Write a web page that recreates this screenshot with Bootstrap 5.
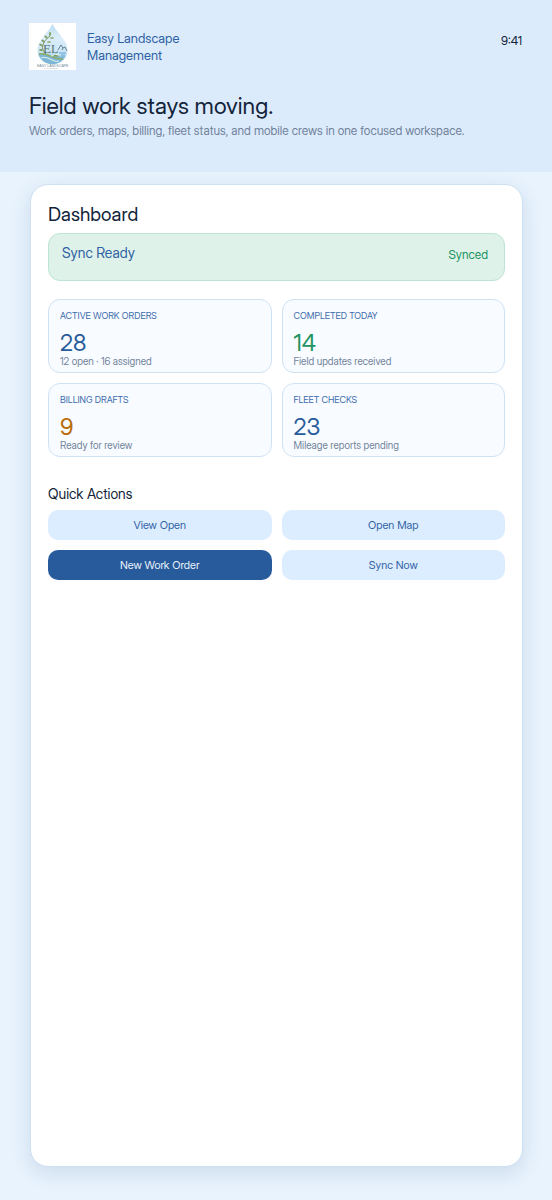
<!DOCTYPE html>
<html lang="en">
<head>
<meta charset="utf-8">
<meta name="viewport" content="width=device-width, initial-scale=1">
<title>Easy Landscape Management</title>
<link href="https://cdn.jsdelivr.net/npm/bootstrap@5.3.0/dist/css/bootstrap.min.css" rel="stylesheet">
<style>
  body { font-family: "Inter Display", Inter, "Liberation Sans", sans-serif; background: #e8f3fd; color: #13243a; }
  .app-header { background: #dcebfb; padding: 23px 30px 32px 29px; }
  .logo { width: 47px; height: 47px; background: #fff; }
  .brand { font-size: 13px; line-height: 17px; color: #2f62a3; max-width: 120px; padding-top: 7px; margin-left: 11px; }
  .clock { font-size: 12px; line-height: 16px; padding-top: 10px; }
  .headline { font-size: 23px; line-height: 30px; font-weight: 400; margin-top: 21px; }
  .muted { color: #71839b; }
  .tagline { font-size: 12px; line-height: 19px; }
  .panel { background: #fff; border: 1px solid #cde1f3; border-radius: 18px; margin: 12px 29px 33px 30px; padding: 17px; box-shadow: 0 6px 20px rgba(40, 80, 120, .14); }
  .panel-title { font-size: 19px; line-height: 26px; font-weight: 400; margin: 0 0 5px; }
  .sync { background: #dff2ea; border: 1px solid #bce5d3; border-radius: 12px; height: 48px; padding: 9px 16px 0 13px; margin-bottom: 18px; }
  .sync-name { font-size: 14px; line-height: 20px; color: #2f62a3; }
  .sync-state { font-size: 12px; line-height: 24px; color: #219461; }
  .tiles { display: grid; grid-template-columns: 1fr 1fr; gap: 10px; }
  .tile { background: #f8fbff; border: 1px solid #cfe2f4; border-radius: 12px; height: 74px; padding: 9px 11px 0; }
  .tile-label { font-size: 9px; line-height: 14px; color: #3c6cab; }
  .tile-value { font-size: 23px; line-height: 28px; color: #285b9b; margin-top: 6px; }
  .tile-note { font-size: 10px; line-height: 12px; margin-top: -2px; }
  .is-green { color: #219461; }
  .is-amber { color: #b96c0c; }
  .section-title { font-size: 14px; line-height: 20px; font-weight: 400; margin: 27px 0 6px; }
  .action { --bs-btn-font-size: 11px; --bs-btn-line-height: 16px; --bs-btn-border-radius: 10px; --bs-btn-bg: #dcedff; --bs-btn-color: #3263a5; --bs-btn-border-width: 0; --bs-btn-hover-bg: #cbe3fc; --bs-btn-hover-color: #285b9b; --bs-btn-padding-y: 7px; }
  .action-main { --bs-btn-bg: #285b9b; --bs-btn-color: #eaf3fd; --bs-btn-hover-bg: #204c83; --bs-btn-hover-color: #fff; }
</style>
</head>
<body>
<div class="d-flex flex-column min-vh-100">
  <header class="app-header">
    <div class="d-flex align-items-start">
      <svg class="logo flex-shrink-0" viewBox="0 0 47 47" role="img" aria-label="Easy Landscape Management logo">
        <defs><linearGradient id="drop" x1="0" y1="0" x2="0" y2="1"><stop offset="0" stop-color="#b9dcf2"/><stop offset=".35" stop-color="#dceefa"/><stop offset=".7" stop-color="#c9e4f6"/><stop offset="1" stop-color="#66add8"/></linearGradient></defs>
        <path d="M23.500 1C20 9 8.500 17 8.500 27C8.500 35 15 41 23.500 41S38.500 35 38.500 27C38.500 17 27 9 23.500 1Z" fill="url(#drop)"/>
        <path d="M9.500 31C17 29 23 35 36 33C33 39 28 41 23.500 41C17 41 11 37 9.500 31Z" fill="#7db6d6"/>
        <path d="M10 31C18 29 24 37 34 36" stroke="#8fab62" stroke-width="1.500" fill="none"/>
        <path d="M12 35C18 32 24 40 30 38M22 33Q30 30 37 31" stroke="#e6f3ef" stroke-width="1" fill="none"/>
        <path d="M24 33Q27 30 30 34Z" fill="#809e4d"/>
        <path d="M17 31C11 26 13 19 21 13" stroke="#607d42" stroke-width=".8" fill="none"/>
        <g fill="#819d5d"><ellipse cx="21" cy="11" rx="1" ry="2"/><ellipse cx="17" cy="14" rx="2" ry="1" transform="rotate(40 17 14)"/><ellipse cx="23" cy="15" rx="2" ry=".8"/><ellipse cx="14" cy="18" rx="2" ry="1" transform="rotate(40 14 18)"/><ellipse cx="20" cy="19" rx="2" ry=".8"/><ellipse cx="12" cy="22" rx="2" ry="1" transform="rotate(30 12 22)"/><ellipse cx="12" cy="27" rx="2" ry="1"/></g>
        <path d="M29 27L32 22L34 25L36 24L38 28M34 25L33 27" stroke="#4e6876" stroke-width=".8" fill="none"/>
        <path d="M30 30H37M32 32H36" stroke="#81b9dd" stroke-width="1.500"/>
        <text x="14" y="30" font-family="Liberation Serif, serif" font-size="13" fill="#55756f">E</text>
        <text x="22" y="30" font-family="Liberation Serif, serif" font-size="12" fill="#55756f">L</text>
        <text x="8" y="44" font-family="Liberation Sans, sans-serif" font-size="3.500" fill="#718b98">EASY LANDSCAPE</text>
        <text x="15" y="46" font-family="Liberation Sans, sans-serif" font-size="2" fill="#a3b2ba">MANAGEMENT</text>
      </svg>
      <div class="brand">Easy Landscape Management</div>
      <time class="clock ms-auto">9:41</time>
    </div>
    <h1 class="headline mb-0">Field work stays moving.</h1>
    <p class="tagline muted mb-0">Work orders, maps, billing, fleet status, and mobile crews in one focused workspace.</p>
  </header>
  <main class="panel flex-grow-1">
    <h2 class="panel-title">Dashboard</h2>
    <div class="sync d-flex justify-content-between align-items-start">
      <span class="sync-name">Sync Ready</span><span class="sync-state">Synced</span>
    </div>
    <div class="tiles">
      <section class="tile"><div class="tile-label">ACTIVE WORK ORDERS</div><div class="tile-value">28</div><div class="tile-note muted">12 open · 16 assigned</div></section>
      <section class="tile"><div class="tile-label">COMPLETED TODAY</div><div class="tile-value is-green">14</div><div class="tile-note muted">Field updates received</div></section>
      <section class="tile"><div class="tile-label">BILLING DRAFTS</div><div class="tile-value is-amber">9</div><div class="tile-note muted">Ready for review</div></section>
      <section class="tile"><div class="tile-label">FLEET CHECKS</div><div class="tile-value">23</div><div class="tile-note muted">Mileage reports pending</div></section>
    </div>
    <h3 class="section-title">Quick Actions</h3>
    <div class="tiles">
      <button type="button" class="btn action">View Open</button>
      <button type="button" class="btn action">Open Map</button>
      <button type="button" class="btn action action-main">New Work Order</button>
      <button type="button" class="btn action">Sync Now</button>
    </div>
  </main>
</div>
<script src="https://cdn.jsdelivr.net/npm/bootstrap@5.3.0/dist/js/bootstrap.bundle.min.js"></script>
</body>
</html>
